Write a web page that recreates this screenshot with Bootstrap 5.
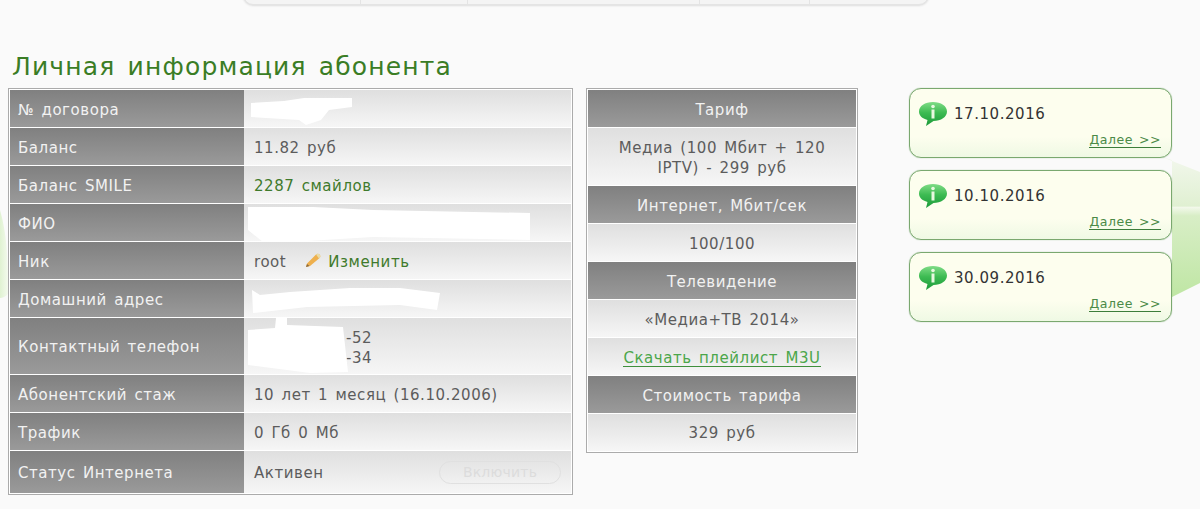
<!DOCTYPE html>
<html lang="ru">
<head>
<meta charset="utf-8">
<title>Личная информация абонента</title>
<link href="https://cdn.jsdelivr.net/npm/bootstrap@5.3.0/dist/css/bootstrap.min.css" rel="stylesheet">
<style>
html,body{height:509px;overflow:hidden}
body{background:#fafafa;font-family:"DejaVu Sans",Verdana,sans-serif;font-size:15px;color:#5c5c5c;position:relative}
.deco{position:absolute;left:0;top:0;z-index:0}
.topbar{position:absolute;left:243px;top:-30px;width:686px;height:35px;background:#f4f4f4;border:1px solid #e4e4e4;border-radius:10px;box-shadow:0 1px 2px #ddd;display:flex}
.topbar span{border-right:1px solid #e4e4e4}
.wrap{position:relative;z-index:1;padding:51px 0 0 8px}
.ttl{font-size:25px;font-weight:400;color:#3a7d25;letter-spacing:1.15px;word-spacing:3px;line-height:32px;margin:0 0 5px 4px}
.cols{display:flex;align-items:flex-start}
.tbl{border-collapse:separate;border-spacing:0;border:1px solid #ababab;background:#fff;padding:1px}
.tbl td,.tbl th{padding:3px 8px 0;font-weight:400;letter-spacing:.55px;word-spacing:2px;vertical-align:middle}
.tbl th{background:linear-gradient(#808080,#9a9a9a);color:#f2f2f2;border-bottom:1px solid #fff}
.tbl td{background:linear-gradient(#dfdfdf,#f6f6f6);border-bottom:1px solid #fff}
.tbl tr:last-child>*{border-bottom:0}
.main{width:565px;height:407px}
.main th{width:234px;padding-left:8px}
.main td{padding-left:10px;position:relative}
.side{width:272px;height:364px;margin-left:13px;text-align:center}
.tbl.side th,.tbl.side td{height:38px;padding:2px 12px 0;text-align:center;line-height:20px}
.tbl.side tr:last-child>*{height:37px;padding-top:1px}
.r38{height:38px}
.grn{color:#3f7a2c}
.blot{position:absolute;left:0;top:0;pointer-events:none}
.dl{color:#4ca64a;border-bottom:1px solid #3f8f3c;line-height:15px;display:inline-block;white-space:nowrap}
.offb{position:absolute;right:10px;top:10px;width:122px;height:23px;border:1px solid #e0e0e0;border-radius:12px;font-size:14px;color:#dcdcdc;text-align:center;line-height:21px;letter-spacing:.2px;padding:0;background:transparent}
.pen{vertical-align:-1px;margin:0 7px 0 19px}
.news{position:absolute;left:909px;width:263px;height:70px;z-index:1;background:linear-gradient(#fdfeee 70%,#eff9e4);border:1px solid #7aa86f;border-radius:12px;box-shadow:0 0 1px #7aa86f;color:#333;letter-spacing:.55px;font-size:15px}
.dt{position:absolute;left:44px;top:15px;line-height:20px}
.more{position:absolute;right:10px;top:43px;font-size:12.5px;line-height:15px;color:#4b8a47;border-bottom:1px solid #3c7d3a;letter-spacing:.55px;word-spacing:1.5px}
.ico{position:absolute;left:8px;top:12px}
</style>
</head>
<body>
<svg class="deco" width="1200" height="509" viewBox="0 0 1200 509">
<defs>
<linearGradient id="gl" x1="0" x2="1"><stop offset="0" stop-color="#e0f2d2"/><stop offset="1" stop-color="#f4faee"/></linearGradient>
<linearGradient id="gr" x1="0" y1="0" x2="0" y2="1"><stop offset="0" stop-color="#f2f7ec"/><stop offset=".35" stop-color="#e0f0d2"/><stop offset=".36" stop-color="#f2f8ea"/><stop offset=".42" stop-color="#d8eec6"/><stop offset="1" stop-color="#bfe6a4"/></linearGradient>
</defs>
<path d="M0 210 Q9 240 8 294 Q4 298 0 298Z" fill="url(#gl)"/>
<path d="M1162 157 L1200 172 V283 L1172 297 V160Z" fill="url(#gr)"/>
</svg>
<div class="topbar"><span style="width:117px"></span><span style="width:107px"></span><span style="width:232px"></span><span style="width:110px"></span></div>
<div class="wrap">
<h1 class="ttl">Личная информация абонента</h1>
<div class="cols">
<table class="tbl main">
<tr class="r38"><th>№ договора</th><td><svg class="blot" width="120" height="38"><path d="M7 13 L40 11 L60 8 L108 8 L108 17 L85 20 L77 30 L62 35 L55 30 L7 27Z" fill="#fff"/></svg></td></tr>
<tr class="r38"><th>Баланс</th><td>11.82 руб</td></tr>
<tr class="r38"><th>Баланс SMILE</th><td class="grn">2287 смайлов</td></tr>
<tr class="r38"><th>ФИО</th><td><svg class="blot" width="300" height="38"><path d="M4 3 L69 3 L129 6 L229 8 L286 9 L286 36 L129 33 L46 38 L19 38 L4 26Z" fill="#fff"/></svg></td></tr>
<tr class="r38"><th>Ник</th><td>root<svg class="pen" width="16" height="15" viewBox="0 0 16 15"><path d="M1 14 L2 10.500 L11 1.500 Q13 0 15 2 Q16 4 14 5.500 L5 13Z" fill="#eeb04e"/><path d="M11 1.500 Q13 0 15 2 Q16 4 14 5.500Z" fill="#e9dba6"/><path d="M1 14 L2 11 L4.500 13Z" fill="#8a6a40"/></svg><span class="grn">Изменить</span></td></tr>
<tr class="r38"><th>Домашний адрес</th><td><svg class="blot" width="220" height="38"><path d="M8 10 L16 15 L46 12 L106 8 L156 8 L196 13 L193 30 L156 25 L63 27 L9 33Z" fill="#fff"/></svg></td></tr>
<tr style="height:57px"><th>Контактный телефон</th><td><div style="line-height:20px;padding-left:92px">-52<br>-34</div><svg class="blot" width="110" height="56"><path d="M4 12 L31 10 L32 0 L43 0 L43 7 L99 9 L104 54 L66 55 L4 47Z" fill="#fff"/></svg></td></tr>
<tr class="r38"><th>Абонентский стаж</th><td>10 лет 1 месяц (16.10.2006)</td></tr>
<tr class="r38"><th>Трафик</th><td>0 Гб 0 Мб</td></tr>
<tr><th>Статус Интернета</th><td>Активен<button class="offb" type="button" disabled>Включить</button></td></tr>
</table>
<table class="tbl side">
<tr><th>Тариф</th></tr>
<tr style="height:58px"><td>Медиа (100 Мбит + 120 IPTV) - 299 руб</td></tr>
<tr><th>Интернет, Мбит/сек</th></tr>
<tr><td>100/100</td></tr>
<tr><th>Телевидение</th></tr>
<tr><td>«Медиа+ТВ 2014»</td></tr>
<tr><td><a class="dl text-decoration-none" href="#">Скачать плейлист M3U</a></td></tr>
<tr><th>Стоимость тарифа</th></tr>
<tr><td>329 руб</td></tr>
</table>
</div>
</div>
<div class="news" style="top:88px"><svg class="ico" width="30" height="26" viewBox="0 0 30 26"><use href="#bub"/></svg><span class="dt">17.10.2016</span><span class="more">Далее &gt;&gt;</span></div>
<div class="news" style="top:170px"><svg class="ico" width="30" height="26" viewBox="0 0 30 26"><use href="#bub"/></svg><span class="dt">10.10.2016</span><span class="more">Далее &gt;&gt;</span></div>
<div class="news" style="top:252px"><svg class="ico" width="30" height="26" viewBox="0 0 30 26"><use href="#bub"/></svg><span class="dt">30.09.2016</span><span class="more">Далее &gt;&gt;</span></div>
<svg width="0" height="0" style="position:absolute"><defs>
<linearGradient id="bg" x1="0" y1="0" x2="0" y2="1"><stop offset="0" stop-color="#7fdc86"/><stop offset=".45" stop-color="#3dbb52"/><stop offset="1" stop-color="#1c9a3a"/></linearGradient>
<g id="bub"><path d="M15 1 C23 1 29 5 29 10.500 C29 16 23 20 15.500 20 L8 25 L9.500 19 C4 17.500 1 14.500 1 10.500 C1 5 7 1 15 1Z" fill="url(#bg)"/><rect x="13.500" y="8.500" width="3" height="9" fill="#e8f8e0"/><circle cx="15" cy="5.500" r="1.800" fill="#e8f8e0"/></g>
</defs></svg>
</body>
</html>
